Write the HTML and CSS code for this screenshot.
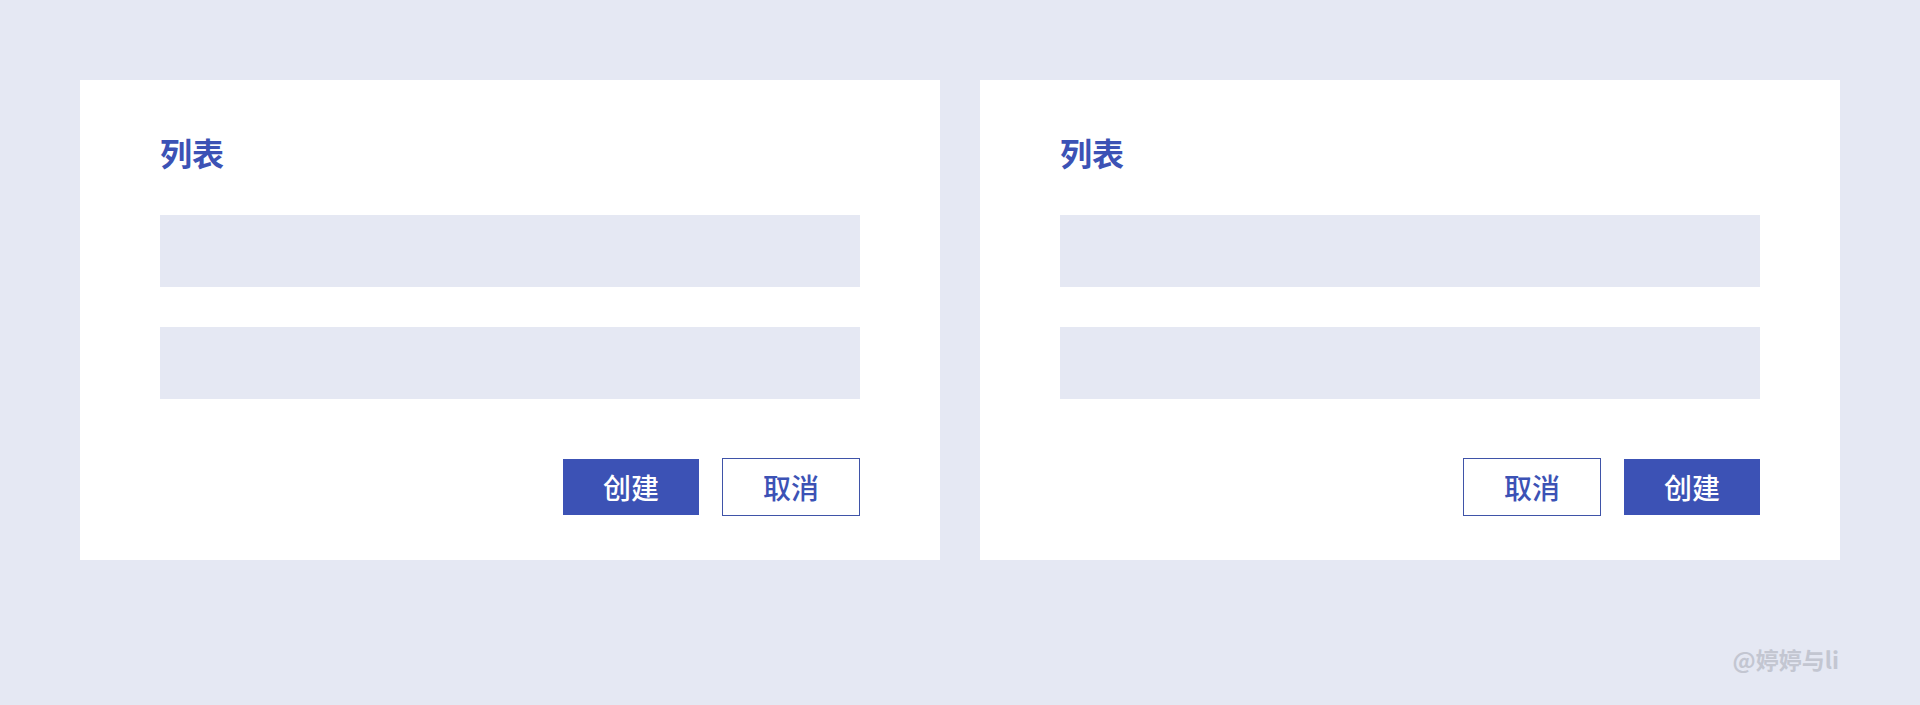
FILE: index.html
```html
<!DOCTYPE html>
<html lang="zh-CN">
<head>
  <meta charset="UTF-8">
  <title>列表</title>
  <link rel="stylesheet" href="styles.css">
</head>
<body>
  <div class="board">
    <div class="card">
      <h2 class="title">列表</h2>
      <div class="row"></div>
      <div class="row"></div>
      <div class="actions">
        <button class="btn primary">创建</button>
        <button class="btn ghost">取消</button>
      </div>
    </div>

    <div class="card">
      <h2 class="title">列表</h2>
      <div class="row"></div>
      <div class="row"></div>
      <div class="actions">
        <button class="btn ghost">取消</button>
        <button class="btn primary">创建</button>
      </div>
    </div>
  </div>

  <div class="mark">@婷婷与li</div>
</body>
</html>
```

FILE: styles.css
```css
body {
  margin: 0;
  background: #e5e8f3;
  font-family: "Noto Sans CJK SC", "Noto Sans", sans-serif;
  height: 705px;
  overflow: hidden;
}
.board {
  display: flex;
  gap: 40px;
  padding: 80px 80px 0;
}
.card {
  width: 860px;
  height: 480px;
  box-sizing: border-box;
  background: #fff;
  padding: 48px 80px 44px;
}
.title {
  margin: 0 0 39px;
  font-size: 32px;
  line-height: 48px;
  font-weight: 700;
  color: #3c52b5;
}
.row {
  height: 72px;
  background: #e5e8f3;
  margin-bottom: 40px;
}
.row + .row {
  margin-bottom: 59px;
}
.actions {
  display: flex;
  justify-content: flex-end;
  align-items: center;
  gap: 23px;
  height: 58px;
}
.btn {
  width: 136px;
  height: 56px;
  box-sizing: content-box;
  padding: 0;
  font-family: inherit;
  font-size: 28px;
  font-weight: 500;
  cursor: pointer;
}
.primary {
  background: #3c52b5;
  color: #fff;
  border: none;
}
.ghost {
  background: #fff;
  color: #3c52b5;
  border: 1px solid #3f53a8;
}
.mark {
  position: absolute;
  right: 81px;
  top: 642px;
  font-size: 23px;
  font-weight: 700;
  color: #c3c6d1;
}
```
